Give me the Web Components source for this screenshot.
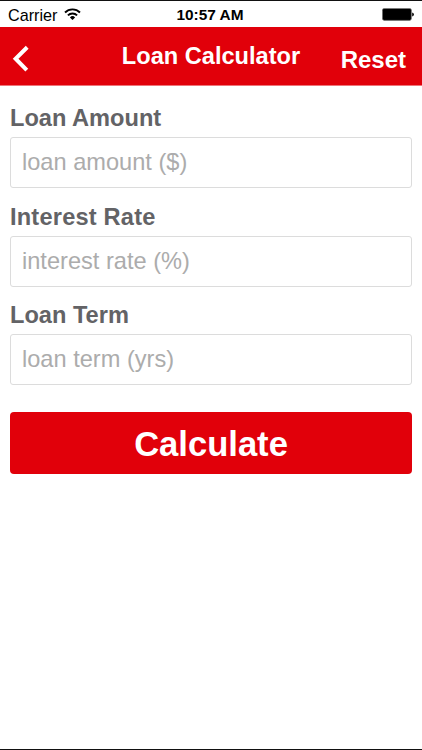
<!DOCTYPE html>
<html lang="en">
<head>
<meta charset="utf-8">
<meta name="viewport" content="width=device-width, initial-scale=1">
<title>Loan Calculator</title>
<style>
    html, body {
        margin: 0;
        height: 100%;
        background: #fff;
        font-family: "Liberation Sans", Arial, sans-serif;
        --brand: #e1000a;
    }
</style>
</head>
<body>
<loan-app></loan-app>

<script>
// status-bar
const templateStatusBar = document.createElement('template');
templateStatusBar.innerHTML = `
    <style>
        :host {
            display: grid;
            grid-template-columns: 1fr auto 1fr;
            align-items: center;
            box-sizing: border-box;
            height: 26px;
            padding: 2px 8px 0;
            color: #000;
            line-height: 20px;
        }
        .carrier {
            display: flex;
            align-items: center;
            gap: 7px;
            font-size: 16.2px;
        }
        .carrier svg {
            margin-top: -3px;
        }
        .time {
            margin-right: 2px;
            font-size: 15.4px;
            font-weight: bold;
        }
        .battery {
            justify-self: end;
            margin-top: -2px;
        }
        svg {
            display: block;
        }
    </style>
    <div class="carrier">
        <span>Carrier</span>
        <svg width="17" height="12" viewBox="0 0 17 12" fill="none" stroke="#000" stroke-width="1.9">
            <path d="M1 4.5a10.6 10.6 0 0 1 15 0"/>
            <path d="M3.9 7.4a6.5 6.5 0 0 1 9.2 0"/>
            <path d="M8.5 12L5.9 9.4a3.7 3.7 0 0 1 5.2 0z" fill="#000" stroke="none"/>
        </svg>
    </div>
    <span class="time"><slot></slot></span>
    <svg class="battery" width="32" height="13" viewBox="0 0 32 13">
        <rect x=".4" y=".4" width="29" height="12" rx="1.8" fill="#000" stroke="#777" stroke-width=".7"/>
        <path d="M30.2 4.6q1.7.3 1.7 1.9t-1.7 1.9z" fill="#000"/>
    </svg>
`;

class StatusBar extends HTMLElement {
    constructor() {
        super();
        this.attachShadow({ mode: 'open' });
        this.shadowRoot.appendChild(templateStatusBar.content.cloneNode(true));
    }
}

customElements.define('status-bar', StatusBar);

// nav-bar
const templateNavBar = document.createElement('template');
templateNavBar.innerHTML = `
    <style>
        :host {
            display: grid;
            grid-template-columns: 1fr auto 1fr;
            box-sizing: border-box;
            height: 59px;
            padding: 0 16px 0 12px;
            background: var(--brand);
            border-bottom: 1px solid #ee7479;
            color: #fff;
            font-size: 23.6px;
            font-weight: bold;
            line-height: 28px;
        }
        button {
            border: 0;
            padding: 0;
            background: none;
            color: inherit;
            font: inherit;
            cursor: pointer;
        }
        .back {
            justify-self: start;
            margin-top: 18px;
            height: 27px;
        }
        .title {
            margin: 15px 0 0 4px;
        }
        .action {
            justify-self: end;
            margin-top: 19px;
            height: 28px;
            font-size: 24px;
        }
        svg {
            display: block;
        }
    </style>
    <button class="back" aria-label="Back">
        <svg width="18" height="27" viewBox="0 0 18 27" fill="none" stroke="#fff" stroke-width="4">
            <path d="M15.2 2.3L3.6 13.7l11.2 11.4"/>
        </svg>
    </button>
    <span class="title"><slot></slot></span>
    <button class="action"><slot name="action"></slot></button>
`;

class NavBar extends HTMLElement {
    constructor() {
        super();
        this.attachShadow({ mode: 'open' });
        this.shadowRoot.appendChild(templateNavBar.content.cloneNode(true));

        this.shadowRoot.querySelector('.action').addEventListener('click', () => {
            this.dispatchEvent(new CustomEvent('action'));
        });
    }
}

customElements.define('nav-bar', NavBar);

// form-field
const templateFormField = document.createElement('template');
templateFormField.innerHTML = `
    <style>
        :host {
            display: flex;
            flex-direction: column;
            gap: 5px;
        }
        label {
            color: #636366;
            font-size: 23.6px;
            font-weight: bold;
            line-height: 28px;
            letter-spacing: var(--label-spacing, 0);
        }
        input {
            box-sizing: border-box;
            width: 100%;
            height: 51px;
            margin: 0;
            padding: 0 11px;
            border: 1px solid #dcdcdc;
            border-radius: 3px;
            background: #fff;
            color: #636366;
            font-family: inherit;
            font-size: 23.6px;
            outline: none;
        }
        input::placeholder {
            color: #acacac;
            opacity: 1;
        }
    </style>
    <label for="field"><slot></slot></label>
    <input id="field" type="text" inputmode="decimal">
`;

class FormField extends HTMLElement {
    constructor() {
        super();
        this.attachShadow({ mode: 'open' });
        this.shadowRoot.appendChild(templateFormField.content.cloneNode(true));
        this.input = this.shadowRoot.querySelector('input');
    }

    connectedCallback() {
        this.input.placeholder = this.getAttribute('placeholder') || '';
    }

    clear() {
        this.input.value = '';
    }
}

customElements.define('form-field', FormField);

// primary-button
const templatePrimaryButton = document.createElement('template');
templatePrimaryButton.innerHTML = `
    <style>
        :host {
            display: block;
        }
        button {
            display: block;
            width: 100%;
            height: 62px;
            border: 0;
            border-radius: 4px;
            padding: 2px 0 0;
            background: var(--brand);
            color: #fff;
            font-family: inherit;
            font-size: 34.6px;
            font-weight: bold;
            line-height: 40px;
            cursor: pointer;
        }
    </style>
    <button><slot></slot></button>
`;

class PrimaryButton extends HTMLElement {
    constructor() {
        super();
        this.attachShadow({ mode: 'open' });
        this.shadowRoot.appendChild(templatePrimaryButton.content.cloneNode(true));
    }
}

customElements.define('primary-button', PrimaryButton);

// loan-app
const templateLoanApp = document.createElement('template');
templateLoanApp.innerHTML = `
    <style>
        :host {
            display: flex;
            flex-direction: column;
            box-sizing: border-box;
            height: 100vh;
            border-top: 1px solid #111;
            border-bottom: 1px solid #111;
            background: #fff;
        }
        form-field + form-field {
            margin-top: 14.7px;
        }
        .rate {
            --label-spacing: .2px;
        }
        main {
            padding: 17.9px 10px 0;
        }
        primary-button {
            margin-top: 26.7px;
        }
    </style>
    <status-bar>10:57 AM</status-bar>
    <nav-bar>Loan Calculator<span slot="action">Reset</span></nav-bar>
    <main>
        <form-field placeholder="loan amount ($)">Loan Amount</form-field>
        <form-field class="rate" placeholder="interest rate (%)">Interest Rate</form-field>
        <form-field placeholder="loan term (yrs)">Loan Term</form-field>
        <primary-button>Calculate</primary-button>
    </main>
`;

class LoanApp extends HTMLElement {
    constructor() {
        super();
        this.attachShadow({ mode: 'open' });
        this.shadowRoot.appendChild(templateLoanApp.content.cloneNode(true));

        // Reset empties every field
        this.shadowRoot.querySelector('nav-bar').addEventListener('action', () => {
            this.shadowRoot.querySelectorAll('form-field').forEach(field => field.clear());
        });
    }
}

customElements.define('loan-app', LoanApp);
</script>
</body>
</html>
